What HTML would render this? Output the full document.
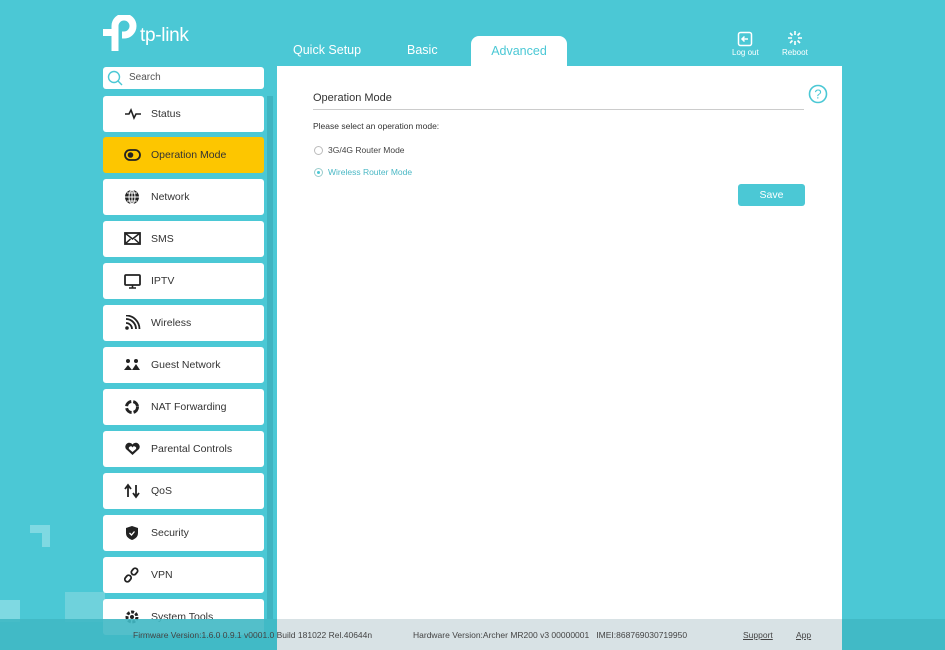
<!DOCTYPE html>
<html><head><meta charset="utf-8"><style>
*{margin:0;padding:0;box-sizing:border-box}
body{width:945px;height:650px;overflow:hidden;background:#4bc8d5;font-family:"Liberation Sans",sans-serif;position:relative}
.abs{position:absolute}
.tab{top:43px;color:#fff;font-size:12.5px}
.adv{left:471px;top:36px;width:96px;height:32px;background:#fff;border-radius:8px 8px 0 0;color:#4bc8d5;font-size:12.5px;text-align:center;padding-top:8px}
.content{left:277px;top:66px;width:565px;height:553px;background:#fff}
.search{left:103px;top:67px;width:161px;height:22px;background:#fff;border-radius:3px;font-size:10px;color:#555;padding:5px 0 0 26px}
.item{left:103px;width:161px;height:36px;background:#fff;border-radius:3px;font-size:10.5px;color:#333;padding:12px 0 0 48px}
.item.sel{background:#fdc600}
.item svg{position:absolute;left:21px;top:10px}
.scroll{left:267px;top:96px;width:6px;height:523px;background:#3fb4c1}
.footer{left:0;top:619px;width:945px;height:31px;background:#40b8c4}
.footer2{left:277px;top:619px;width:565px;height:31px;background:#d8e2e5}
.ft{top:630px;font-size:8.5px;color:#444}
</style></head><body>
<div class="abs" style="left:30px;top:525px;width:20px;height:8px;background:#7fd9e2"></div>
<div class="abs" style="left:42px;top:525px;width:8px;height:22px;background:#7fd9e2"></div>
<div class="abs" style="left:65px;top:592px;width:40px;height:30px;background:#6fd2dc"></div>
<div class="abs" style="left:0;top:600px;width:20px;height:22px;background:#7fd9e2"></div>

<svg class="abs" style="left:103px;top:15px" width="36" height="38" viewBox="0 0 36 38"><path d="M12 14 V36" stroke="#fff" stroke-width="7" fill="none"/><path d="M12 14 V11 a9 9 0 1 1 9 9 h-2" stroke="#fff" stroke-width="7" fill="none"/><rect x="0" y="14" width="14" height="7" fill="#fff"/></svg>
<div class="abs" style="left:140px;top:25px;color:#fff;font-size:19px;letter-spacing:-0.3px">tp-link</div>

<div class="abs tab" style="left:293px">Quick Setup</div>
<div class="abs tab" style="left:407px">Basic</div>
<div class="abs adv">Advanced</div>

<svg class="abs" style="left:737px;top:31px" width="16" height="16" viewBox="0 0 16 16"><rect x="1.5" y="1.5" width="13" height="13" rx="2" fill="none" stroke="#fff" stroke-width="1.5"/><path d="M11 8H5M7.5 5.5L5 8l2.5 2.5" stroke="#fff" stroke-width="1.5" fill="none"/></svg>
<div class="abs" style="left:732px;top:48px;color:#fff;font-size:8px">Log out</div>
<svg class="abs" style="left:787px;top:30px" width="16" height="16" viewBox="0 0 16 16" stroke="#fff" stroke-width="1.6"><path d="M8 1v4M8 11v4M1 8h4M11 8h4M3 3l2.5 2.5M10.5 10.5L13 13M13 3l-2.5 2.5M5.5 10.5L3 13"/></svg>
<div class="abs" style="left:782px;top:48px;color:#fff;font-size:8px">Reboot</div>

<div class="abs content"></div>
<div class="abs" style="left:313px;top:92px;font-size:11px;color:#333">Operation Mode</div>
<div class="abs" style="left:313px;top:109px;width:491px;height:1px;background:#ccc"></div>
<svg class="abs" style="left:808px;top:84px" width="20" height="20"><circle cx="10" cy="10" r="8.5" fill="none" stroke="#4bc8d5" stroke-width="1.6"/><text x="10" y="14.5" text-anchor="middle" font-size="13" fill="#4bc8d5" font-family="Liberation Sans">?</text></svg>
<div class="abs" style="left:313px;top:121px;font-size:8.5px;color:#333">Please select an operation mode:</div>
<div class="abs" style="left:314px;top:146px;width:9px;height:9px;border:1px solid #bbb;border-radius:50%"></div>
<div class="abs" style="left:328px;top:145px;font-size:8.5px;color:#444">3G/4G Router Mode</div>
<div class="abs" style="left:314px;top:168px;width:9px;height:9px;border:1px solid #9cc;border-radius:50%"><div style="margin:2px;width:3px;height:3px;border-radius:50%;background:#4bc8d5"></div></div>
<div class="abs" style="left:328px;top:167px;font-size:8.5px;color:#4bb8c5">Wireless Router Mode</div>
<div class="abs" style="left:738px;top:184px;width:67px;height:22px;background:#4bc8d5;border-radius:3px;color:#fff;font-size:10.5px;text-align:center;padding-top:5px">Save</div>

<div class="abs search">Search</div>
<svg class="abs" style="left:107px;top:70px" width="16" height="16"><circle cx="7" cy="7" r="5.5" fill="none" stroke="#4bc8d5" stroke-width="1.4"/><path d="M11 11l4 4" stroke="#4bc8d5" stroke-width="1.4"/></svg>
<div class="abs scroll"></div>

<div class="abs item" style="top:96px"><svg width="18" height="16"><path d="M1 8h4l2-4 3 8 2-4h5" stroke="#222" stroke-width="1.6" fill="none"/></svg>Status</div>
<div class="abs item sel" style="top:137px"><svg width="18" height="16"><rect x="1" y="3" width="15" height="10" rx="5" fill="none" stroke="#222" stroke-width="1.8"/><circle cx="6.5" cy="8" r="2.8" fill="#222"/></svg>Operation Mode</div>
<div class="abs item" style="top:179px"><svg width="18" height="16"><circle cx="8" cy="8" r="7" fill="#222"/><path d="M1 8h14M8 1v14M3 4h10M3 12h10" stroke="#fff" stroke-width="1"/><ellipse cx="8" cy="8" rx="3" ry="7" fill="none" stroke="#fff" stroke-width="1"/></svg>Network</div>
<div class="abs item" style="top:221px"><svg width="18" height="16"><rect x="1" y="2" width="15" height="11" fill="none" stroke="#222" stroke-width="1.8"/><path d="M1 2l7.5 6L16 2M1 13l5.5-5M16 13l-5.5-5" stroke="#222" stroke-width="1.5" fill="none"/></svg>SMS</div>
<div class="abs item" style="top:263px"><svg width="18" height="16"><rect x="1" y="2" width="15" height="10" rx="1" fill="none" stroke="#222" stroke-width="1.8"/><path d="M5 15h7M8.5 12v3" stroke="#222" stroke-width="1.6"/></svg>IPTV</div>
<div class="abs item" style="top:305px"><svg width="18" height="16"><circle cx="3" cy="13" r="1.8" fill="#222"/><path d="M2 8a6 6 0 0 1 6 6M2 4a10 10 0 0 1 10 10M2 0.5a13.5 13.5 0 0 1 13.5 13.5" stroke="#222" stroke-width="1.8" fill="none"/></svg>Wireless</div>
<div class="abs item" style="top:347px"><svg width="18" height="16"><circle cx="4" cy="4" r="2" fill="#222"/><circle cx="12" cy="4" r="2" fill="#222"/><path d="M0 13l4-5 4 5z M8 13l4-6 4 6z" fill="#222"/></svg>Guest Network</div>
<div class="abs item" style="top:389px"><svg width="18" height="16"><circle cx="8" cy="8" r="5.5" fill="none" stroke="#222" stroke-width="3" stroke-dasharray="7 2"/></svg>NAT Forwarding</div>
<div class="abs item" style="top:431px"><svg width="18" height="16"><path d="M8.5 14L2 8a3.8 3.8 0 0 1 6.5-4.5A3.8 3.8 0 0 1 15 8z" fill="#222"/><path d="M8.5 11L5 8a1.8 1.8 0 0 1 3.5-1.5A1.8 1.8 0 0 1 12 8z" fill="#fff"/></svg>Parental Controls</div>
<div class="abs item" style="top:473px"><svg width="18" height="16"><path d="M4 14V3M1 6l3-4 3 4M12 2v11M9 10l3 4 3-4" stroke="#222" stroke-width="1.8" fill="none"/></svg>QoS</div>
<div class="abs item" style="top:515px"><svg width="18" height="16"><path d="M8 1l6 2v5c0 4-3 6-6 7-3-1-6-3-6-7V3z" fill="#222"/><path d="M5.5 8l2 2 3-3.5" stroke="#fff" stroke-width="1.3" fill="none"/></svg>Security</div>
<div class="abs item" style="top:557px"><svg width="18" height="16"><rect x="1.5" y="8" width="5" height="7" rx="2.5" transform="rotate(40 4 11.5)" fill="none" stroke="#222" stroke-width="1.8"/><rect x="8" y="1" width="5" height="7" rx="2.5" transform="rotate(40 10.5 4.5)" fill="none" stroke="#222" stroke-width="1.8"/></svg>VPN</div>
<div class="abs item" style="top:599px"><svg width="18" height="16"><circle cx="8" cy="8" r="5" fill="none" stroke="#222" stroke-width="3" stroke-dasharray="3 1.5"/><circle cx="8" cy="8" r="2" fill="#222"/></svg>System Tools</div>

<div class="abs footer" style="opacity:0.9"></div>
<div class="abs footer2"></div>
<div class="abs ft" style="left:133px">Firmware Version:1.6.0 0.9.1 v0001.0 Build 181022 Rel.40644n</div>
<div class="abs ft" style="left:413px">Hardware Version:Archer MR200 v3 00000001&nbsp;&nbsp;&nbsp;IMEI:868769030719950</div>
<div class="abs ft" style="left:743px;text-decoration:underline">Support</div>
<div class="abs ft" style="left:796px;text-decoration:underline">App</div>
</body></html>
